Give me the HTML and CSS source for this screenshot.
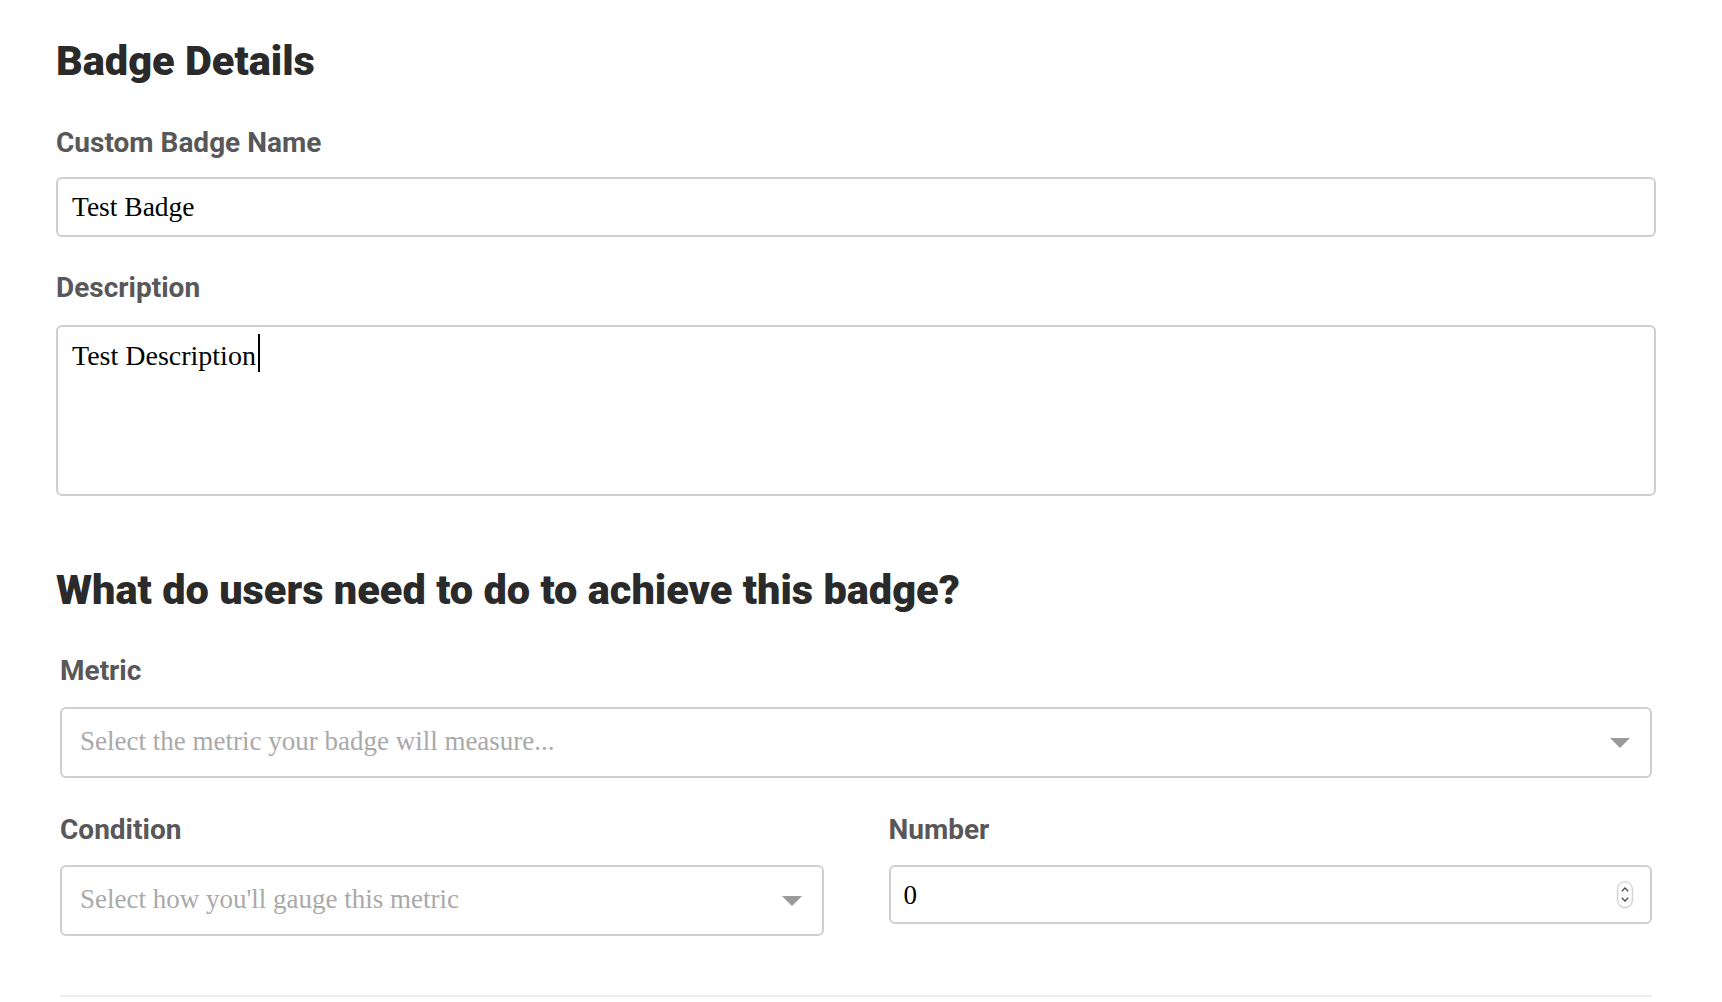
FILE: index.html
```html
<!DOCTYPE html>
<html lang="en">
<head>
<meta charset="utf-8">
<title>Badge Details</title>
<link rel="stylesheet" href="styles.css">
</head>
<body>
<main class="page">
  <h1 class="heading">Badge Details</h1>

  <label class="label label-name" for="badge-name">Custom Badge Name</label>
  <input class="text-input" id="badge-name" type="text" value="Test Badge">

  <label class="label label-desc">Description</label>
  <div class="textarea">Test Description<span class="caret"></span></div>

  <h2 class="heading heading-criteria">What do users need to do to achieve this badge?</h2>

  <section class="criteria">
    <div class="label label-metric">Metric</div>
    <div class="select select-metric">
      <span class="placeholder">Select the metric your badge will measure...</span>
      <svg class="arrow" width="20" height="10" viewBox="0 0 20 10"><path d="M0 0 H20 L10 10 Z" fill="#9a9a9a"/></svg>
    </div>

    <div class="row">
      <div class="col">
        <div class="label">Condition</div>
        <div class="select select-condition">
          <span class="placeholder">Select how you'll gauge this metric</span>
          <svg class="arrow" width="20" height="10" viewBox="0 0 20 10"><path d="M0 0 H20 L10 10 Z" fill="#9a9a9a"/></svg>
        </div>
      </div>
      <div class="col">
        <div class="label">Number</div>
        <div class="number-field">
          <span class="number-value">0</span>
          <svg class="spinner" width="16" height="27" viewBox="0 0 16 27">
            <rect x="0.75" y="0.75" width="14.5" height="25.5" rx="7.25" fill="#fff" stroke="#c9c9c9" stroke-width="1"/>
            <path d="M4.8 10.2 L8 7 L11.2 10.2" fill="none" stroke="#4a4a4a" stroke-width="1.3"/>
            <path d="M4.8 16.8 L8 20 L11.2 16.8" fill="none" stroke="#4a4a4a" stroke-width="1.3"/>
          </svg>
        </div>
      </div>
    </div>

    <hr class="divider">
  </section>
</main>
</body>
</html>
```

FILE: styles.css
```css
* {
  box-sizing: border-box;
}

html, body {
  margin: 0;
  padding: 0;
  background: #ffffff;
}

body {
  font-family: Roboto, "Liberation Sans", sans-serif;
}

.page {
  padding: 36px 66px 0 56px;
  display: flex;
  flex-direction: column;
}

.heading {
  margin: 0;
  font-family: Roboto, "Liberation Sans", sans-serif;
  font-weight: 900;
  font-size: 41.5px;
  line-height: 50px;
  color: #2a2a2a;
}

.heading-criteria {
  margin-top: 69px;
}

.label {
  display: block;
  font-family: Roboto, "Liberation Sans", sans-serif;
  font-weight: 700;
  font-size: 28px;
  line-height: 34px;
  color: #58575a;
}

.label-name {
  margin-top: 40px;
}

.label-desc {
  margin-top: 34px;
}

.text-input {
  margin-top: 17px;
  height: 60px;
  width: 100%;
  border: 2px solid #cfcfcf;
  border-radius: 6px;
  padding: 0 14px;
  font-family: "Liberation Serif", "Times New Roman", serif;
  font-size: 27.5px;
  color: #000;
  background: #fff;
  outline: none;
}

.textarea {
  margin-top: 20px;
  height: 171px;
  border: 2px solid #cfcfcf;
  border-radius: 6px;
  padding: 13px 14px;
  font-family: "Liberation Serif", "Times New Roman", serif;
  font-size: 28px;
  line-height: 32px;
  color: #000;
}

.caret {
  display: inline-block;
  width: 2px;
  height: 38px;
  margin-top: -12px;
  margin-left: 2px;
  background: #000;
  vertical-align: -7px;
}

.criteria {
  padding: 0 4px;
  display: flex;
  flex-direction: column;
}

.label-metric {
  margin-top: 39px;
}

.select {
  margin-top: 19px;
  height: 71px;
  border: 2px solid #cfcfcf;
  border-radius: 6px;
  padding: 0 20px 3px 18px;
  display: flex;
  align-items: center;
  justify-content: space-between;
  background: #fff;
}

.select .arrow {
  margin-top: 3px;
  flex: none;
}

.placeholder {
  font-family: "Liberation Serif", "Times New Roman", serif;
  font-size: 27px;
  line-height: 32px;
  color: #a9a9a9;
}

.row {
  margin-top: 35px;
  display: grid;
  grid-template-columns: 1fr 1fr;
  column-gap: 65px;
  align-items: start;
}

.col {
  display: flex;
  flex-direction: column;
}

.select-condition {
  margin-top: 18px;
}

.number-field {
  margin-top: 18px;
  height: 59px;
  border: 2px solid #cfcfcf;
  border-radius: 6px;
  padding: 0 17px 0 13px;
  display: flex;
  align-items: center;
  justify-content: space-between;
}

.number-value {
  font-family: "Liberation Serif", "Times New Roman", serif;
  font-size: 27px;
  line-height: 32px;
  color: #000;
}

.spinner {
  flex: none;
  filter: drop-shadow(0 1px 1px rgba(0, 0, 0, 0.12));
}

.divider {
  margin: 59px 0 0 0;
  height: 2px;
  border: none;
  background: #eeeeee;
}
```
